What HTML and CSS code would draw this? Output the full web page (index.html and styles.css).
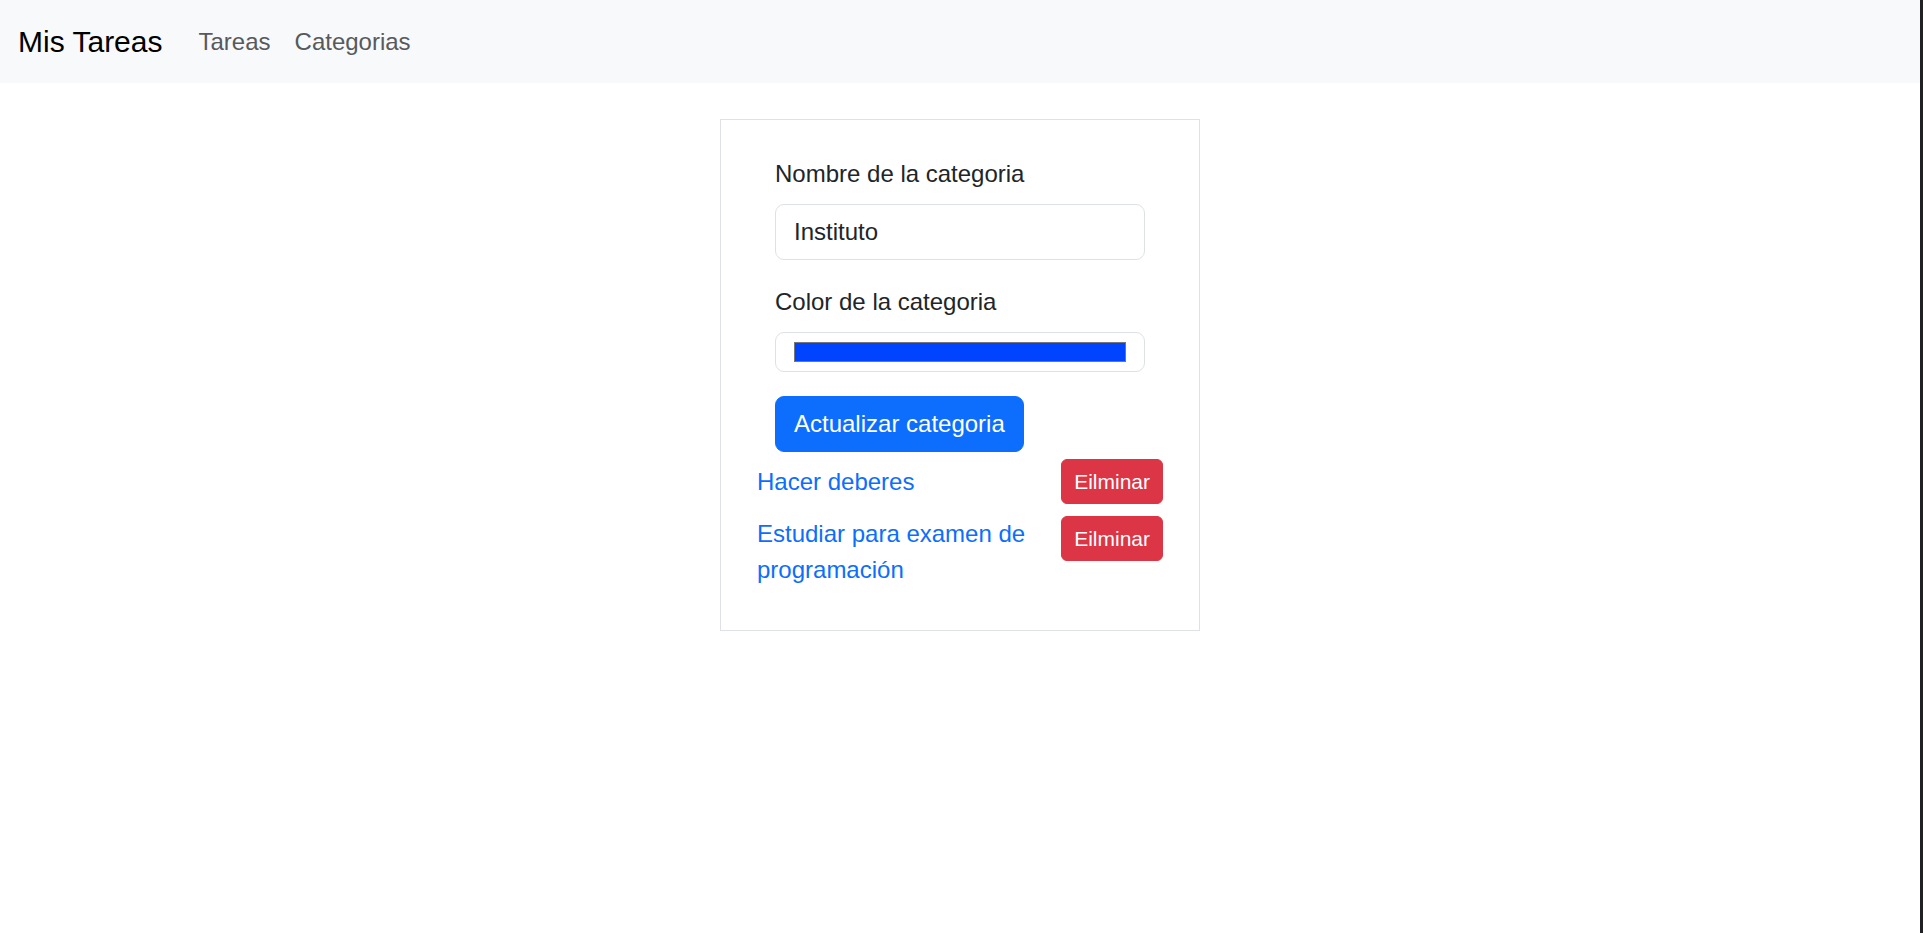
FILE: index.html
```html
<!DOCTYPE html>
<html lang="es">
<head>
<meta charset="utf-8">
<title>Mis Tareas</title>
<link rel="stylesheet" href="styles.css">
</head>
<body>
<div class="page">
  <nav class="navbar">
    <a class="brand" href="#">Mis Tareas</a>
    <a class="nav-link" href="#">Tareas</a>
    <a class="nav-link" href="#">Categorias</a>
  </nav>
  <main class="content">
    <section class="card">
      <form class="form">
        <label class="label" for="nombre">Nombre de la categoria</label>
        <input class="input" id="nombre" type="text" value="Instituto">
        <label class="label" for="color">Color de la categoria</label>
        <div class="input input-color" id="color"><div class="swatch"></div></div>
        <button class="btn btn-primary" type="button">Actualizar categoria</button>
      </form>
      <div class="tasks">
        <div class="task task-center">
          <a class="task-link" href="#">Hacer deberes</a>
          <button class="btn-sm btn-danger" type="button">Eilminar</button>
        </div>
        <div class="task">
          <a class="task-link" href="#">Estudiar para examen de programación</a>
          <button class="btn-sm btn-danger" type="button">Eilminar</button>
        </div>
      </div>
    </section>
  </main>
</div>
</body>
</html>
```

FILE: styles.css
```css
* { box-sizing: border-box; }

html, body {
  margin: 0;
  padding: 0;
  background: #ffffff;
}

body {
  font-family: "Liberation Sans", Arial, sans-serif;
  font-size: 24px;
  line-height: 36px;
  color: #212529;
  border-right: 3px solid #202124;
  min-height: 933px;
}

.page {
  min-height: 933px;
}

.navbar {
  height: 83px;
  background: #f8f9fa;
  display: flex;
  align-items: center;
  padding: 0 18px;
}

.brand {
  font-size: 30px;
  line-height: 45px;
  padding: 7.5px 0;
  color: #000000;
  text-decoration: none;
  margin-right: 24px;
}

.nav-link {
  font-size: 24px;
  line-height: 36px;
  padding: 12px 12px;
  color: #575a5d;
  text-decoration: none;
}

.content {
  display: flex;
  justify-content: center;
  padding-top: 36px;
}

.card {
  width: 480px;
  border: 1px solid #dee2e6;
  padding: 36px 36px 42px;
}

.form {
  padding: 0 18px;
  display: flex;
  flex-direction: column;
  align-items: flex-start;
}

.label {
  display: block;
  margin-bottom: 12px;
}

.input {
  width: 100%;
  height: 56px;
  border: 1px solid #dee2e6;
  border-radius: 9px;
  padding: 9px 18px;
  font-family: inherit;
  font-size: 24px;
  line-height: 36px;
  color: #212529;
  margin: 0 0 24px;
  outline: none;
  background: #fff;
}

.input-color {
  height: 40px;
  padding: 9px 18px;
}

.swatch {
  height: 20px;
  width: 100%;
  background: #0044ff;
  border: 1px solid #777777;
}

.btn {
  font-family: inherit;
  font-size: 24px;
  line-height: 36px;
  padding: 9px 18px;
  border: 1px solid transparent;
  border-radius: 9px;
  cursor: pointer;
}

.btn-primary {
  background: #0d6efd;
  border-color: #0d6efd;
  color: #ffffff;
}

.tasks {
  margin-top: 7px;
  display: flex;
  flex-direction: column;
  gap: 12px;
}

.task {
  display: flex;
  justify-content: space-between;
  align-items: flex-start;
  gap: 12px;
}

.task-center {
  align-items: center;
}

.task-link {
  color: #0d6efd;
  text-decoration: none;
  font-size: 24px;
  line-height: 36px;
}

.btn-sm {
  font-family: inherit;
  font-size: 21px;
  line-height: 31px;
  padding: 6px 12px;
  border: 1px solid transparent;
  border-radius: 6px;
  flex-shrink: 0;
  cursor: pointer;
}

.btn-danger {
  background: #dc3545;
  border-color: #dc3545;
  color: #ffffff;
}
```
